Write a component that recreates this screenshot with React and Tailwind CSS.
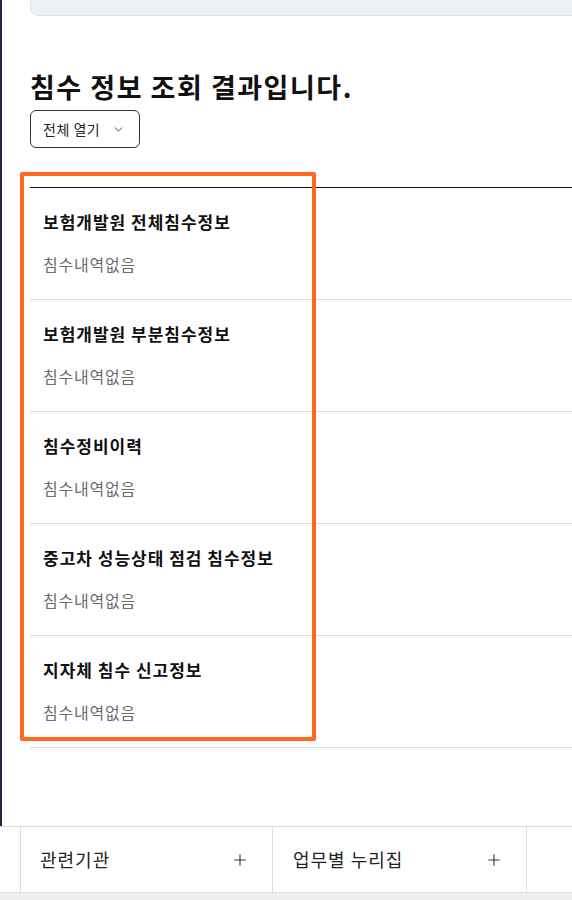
import { ChevronDown, Plus } from "lucide-react";

const items = [
    "보험개발원 전체침수정보",
    "보험개발원 부분침수정보",
    "침수정비이력",
    "중고차 성능상태 점검 침수정보",
    "지자체 침수 신고정보",
];

export default function App() {
    return (
        <div className="relative w-[572px] h-[900px] overflow-hidden bg-white text-[#111] font-['Noto_Sans_CJK_KR','Noto_Sans',sans-serif]">
            {/* Main content */}
            <div className="h-[826px] border-l-2 border-[#1e2a44] pl-[28px]">
                <div className="h-[16px] bg-[#edf0f4] border-b border-l border-[#dfe3ea] rounded-bl-lg" />

                <h1 className="mt-[54px] text-[27px] leading-[34px] font-bold tracking-[1.5px]">침수 정보 조회 결과입니다.</h1>

                <button className="mt-[6px] h-[38px] w-[110px] flex items-center gap-[12px] pl-[12px] border border-[#333] rounded-md text-[14px] tracking-[0.5px] text-[#222]">
                    전체 열기
                    <ChevronDown className="w-[13px] h-[13px]" strokeWidth={1.5} />
                </button>

                {/* Result list */}
                <div className="mt-[39px] border-t border-[#111]">
                    {items.map((label) => (
                        <div key={label} className="pl-[13px] pt-[22px] pb-[24px] border-b border-[#d8dde7]">
                            <h3 className="text-[17px] leading-6 font-bold tracking-[1px]">{label}</h3>
                            <p className="mt-[19px] text-[16px] leading-[22px] tracking-[0.8px] text-[#6b6b6b]">침수내역없음</p>
                        </div>
                    ))}
                </div>
            </div>

            {/* Footer links */}
            <div className="flex h-[67px] border-t border-b border-[#dcdcdc]">
                <div className="w-[21px] border-r border-[#dcdcdc]" />
                <div className="w-[252px] flex items-center justify-between pl-[19px] pr-[23px] border-r border-[#dcdcdc] text-[18px] tracking-[1px] text-[#222]">
                    관련기관
                    <Plus className="w-[18px] h-[18px] text-[#333]" strokeWidth={1.5} />
                </div>
                <div className="w-[254px] flex items-center justify-between pl-[20px] pr-[23px] border-r border-[#dcdcdc] text-[18px] tracking-[1px] text-[#222]">
                    업무별 누리집
                    <Plus className="w-[18px] h-[18px] text-[#333]" strokeWidth={1.5} />
                </div>
                <div className="flex-1" />
            </div>
            <div className="h-[8px] bg-[#efefef]" />

            {/* Highlight annotation */}
            <div className="absolute left-[20px] top-[172px] w-[296px] h-[569px] border-[4px] border-[#ff6a1f] rounded-[2px]" />
        </div>
    );
}
